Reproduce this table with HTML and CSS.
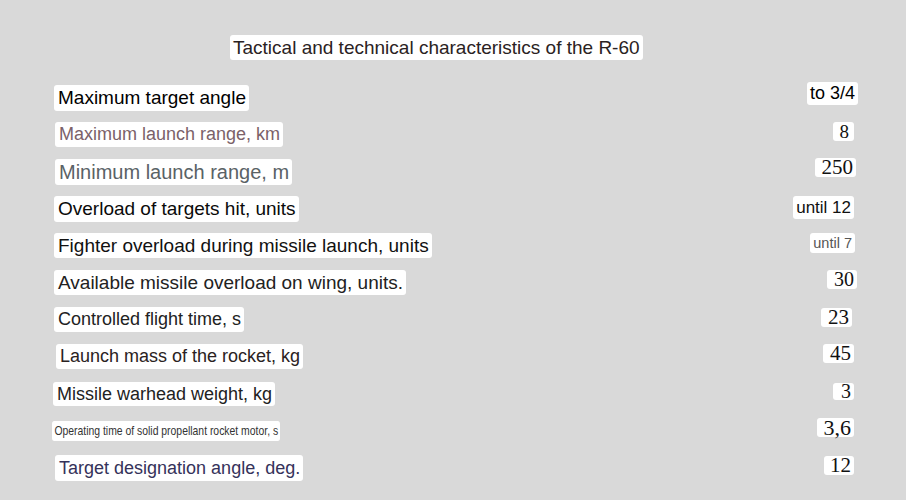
FILE: index.html
```html
<!DOCTYPE html>
<html lang="en">
<head>
<meta charset="utf-8">
<title>R-60</title>
<link rel="stylesheet" href="styles.css">
</head>
<body>
<div class="page">
  <div class="title-row"><span class="title">Tactical and technical characteristics of the R-60</span></div>
  <div class="rows">
    <div class="row"><span class="label l1">Maximum target angle</span><span class="value sans v1">to 3/4</span></div>
    <div class="row"><span class="label l2">Maximum launch range, km</span><span class="value serif v2">8</span></div>
    <div class="row"><span class="label l3">Minimum launch range, m</span><span class="value serif v3">250</span></div>
    <div class="row"><span class="label l4">Overload of targets hit, units</span><span class="value sans v4">until 12</span></div>
    <div class="row"><span class="label l5">Fighter overload during missile launch, units</span><span class="value sans v5">until 7</span></div>
    <div class="row"><span class="label l6">Available missile overload on wing, units.</span><span class="value serif v6">30</span></div>
    <div class="row"><span class="label l7">Controlled flight time, s</span><span class="value serif v7">23</span></div>
    <div class="row"><span class="label l8">Launch mass of the rocket, kg</span><span class="value serif v8">45</span></div>
    <div class="row"><span class="label l9">Missile warhead weight, kg</span><span class="value serif v9">3</span></div>
    <div class="row"><span class="label l10">Operating time of solid propellant rocket motor, s</span><span class="value serif v10">3,6</span></div>
    <div class="row"><span class="label l11">Target designation angle, deg.</span><span class="value serif v11">12</span></div>
  </div>
</div>
</body>
</html>
```
FILE: styles.css
```css
html, body {
  margin: 0;
  padding: 0;
  background: #d9d9d9;
}
body {
  font-family: "Liberation Sans", Arial, sans-serif;
  width: 906px;
  height: 500px;
  overflow: hidden;
}
.page {
  padding-top: 35px;
}
.title-row {
  display: flex;
  padding-left: 230px;
  height: 25px;
}
.title {
  background: #fff;
  border-radius: 3px;
  font-size: 19px;
  line-height: 21px;
  padding: 2px 3px 2px 3px;
  color: #2a2222;
  white-space: nowrap;
}
.rows {
  margin-top: 19px;
  display: flex;
  flex-direction: column;
  padding-left: 54px;
  padding-right: 52px;
}
.row {
  height: 37px;
  display: flex;
  align-items: center;
  justify-content: space-between;
}
.label {
  background: #fff;
  border-radius: 3px;
  padding: 2px 3px 2px 4px;
  line-height: 22px;
  font-size: 19px;
  white-space: nowrap;
  color: #222;
}
.value {
  background: #fff;
  border-radius: 3px;
  white-space: nowrap;
  margin-bottom: 5px;
  color: #111;
}
.sans {
  font-family: "Liberation Sans", Arial, sans-serif;
  padding: 1px 3px 1px 3px;
  line-height: 21px;
}
.serif {
  font-family: "Liberation Serif", "Times New Roman", serif;
  padding: 0 3px 0 7px;
  line-height: 19px;
}
.l1 { color: #000; font-size: 19px; }
.l2 { color: #7b6169; font-size: 18px; margin-left: 1px; line-height: 21px; }
.l3 { color: #5a6266; font-size: 20px; margin-left: 1px; }
.l4 { color: #0a0a0a; }
.l5 { color: #111; line-height: 21px; }
.l6 { color: #222; line-height: 21px; }
.l7 { color: #222; font-size: 18px; line-height: 21px; }
.l8 { color: #2a2222; font-size: 18px; margin-left: 2px; line-height: 21px; }
.l9 { color: #222; font-size: 18px; margin-left: -1px; line-height: 20px; }
.l10 {
  color: #333;
  font-size: 13px;
  line-height: 16px;
  margin-left: -2px;
  padding: 2px 2px 2px 3px;
  transform: scaleX(0.8);
  transform-origin: left center;
}
.l11 { color: #35325a; font-size: 18px; margin-left: 1px; line-height: 22px; }

.v1 { font-size: 18px; color: #000; margin-right: -4px; margin-bottom: 9px; }
.v2 { font-size: 19px; margin-bottom: 6px; padding-right: 5px; }
.v3 { font-size: 21px; margin-right: -2px; margin-bottom: 8px; }
.v4 { font-size: 17px; margin-bottom: 2px; }
.v5 { font-size: 14.5px; color: #555; margin-right: -1px; line-height: 18px; margin-bottom: 6px; }
.v6 { font-size: 20px; margin-right: -3px; margin-bottom: 6px; }
.v7 { font-size: 21px; margin-right: 2px; margin-bottom: 4px; }
.v8 { font-size: 21px; margin-bottom: 6px; }
.v9 { font-size: 20px; margin-bottom: 5px; padding-left: 8px; line-height: 17px; }
.v10 { font-size: 22px; margin-bottom: 7px; }
.v11 { font-size: 21px; margin-bottom: 4px; padding-left: 6px; }
```
